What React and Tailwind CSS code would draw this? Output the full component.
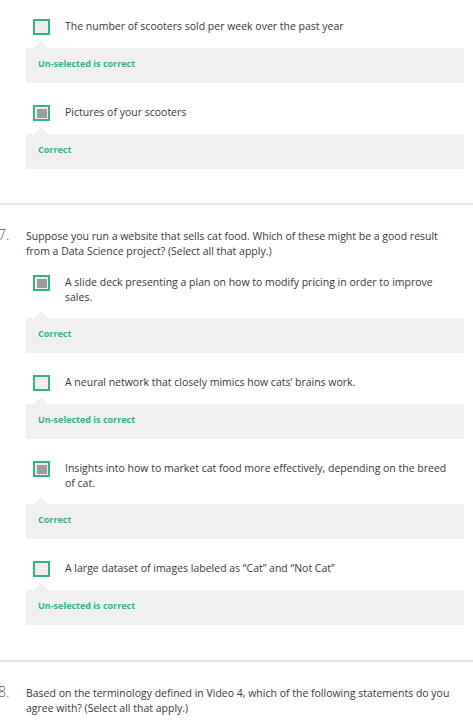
import React from "react";

function Checkbox({ checked }) {
  return (
    <div className="w-[17px] h-[16px] shrink-0 border-2 border-[#33b57c] bg-[#eeeeee] flex items-center justify-center">
      {checked && <div className="w-[10px] h-[9px] bg-[#9c9c9c]" />}
    </div>
  );
}

function Option({ text, checked, feedback }) {
  return (
    <div className="mb-[22px]">
      <div className="flex items-start pl-[7px] pr-[12px]">
        <Checkbox checked={checked} />
        <div className="ml-[15px] leading-[15px] text-[10.5px] text-[#383838]">{text}</div>
      </div>
      <div className="relative mt-[13px] h-[35px] bg-[#f0f0f0] pl-[12px] pt-[9px]">
        <div className="absolute left-[8px] top-[-7px] w-0 h-0 border-l-[7.5px] border-r-[7.5px] border-b-[7px] border-l-transparent border-r-transparent border-b-[#f0f0f0]" />
        <div className="text-[9px] leading-[13px] font-bold text-[#33b57c]">{feedback}</div>
      </div>
    </div>
  );
}

function Question({ num, text, children }) {
  return (
    <div className="pt-[22px] pb-[13px] pr-[9px]">
      <div className="flex items-baseline pr-[12px]">
        <div className="w-[28px] -ml-[2px] shrink-0 text-[14px] leading-[15px] font-light text-[#555]">{num}</div>
        <div className="text-[10.5px] leading-[15px] text-[#383838]">{text}</div>
      </div>
      {children && <div className="mt-[16px] pl-[26px]">{children}</div>}
    </div>
  );
}

export default function App() {
  return (
    <div className="w-[473px] h-[721px] overflow-hidden bg-white" style={{ fontFamily: '"Open Sans", sans-serif' }}>
      <div className="pt-[19px] pb-[12px] pl-[26px] pr-[9px]">
        <Option text="The number of scooters sold per week over the past year" checked={false} feedback="Un-selected is correct" />
        <Option text="Pictures of your scooters" checked={true} feedback="Correct" />
      </div>
      <div className="h-[2px] bg-[#e6e6e6]" />
      <Question num="7." text="Suppose you run a website that sells cat food. Which of these might be a good result from a Data Science project? (Select all that apply.)">
        <Option text="A slide deck presenting a plan on how to modify pricing in order to improve sales." checked={true} feedback="Correct" />
        <Option text="A neural network that closely mimics how cats’ brains work." checked={false} feedback="Un-selected is correct" />
        <Option text="Insights into how to market cat food more effectively, depending on the breed of cat." checked={true} feedback="Correct" />
        <Option text="A large dataset of images labeled as “Cat” and “Not Cat”" checked={false} feedback="Un-selected is correct" />
      </Question>
      <div className="h-[2px] bg-[#e6e6e6]" />
      <Question num="8." text="Based on the terminology defined in Video 4, which of the following statements do you agree with? (Select all that apply.)" />
    </div>
  );
}
